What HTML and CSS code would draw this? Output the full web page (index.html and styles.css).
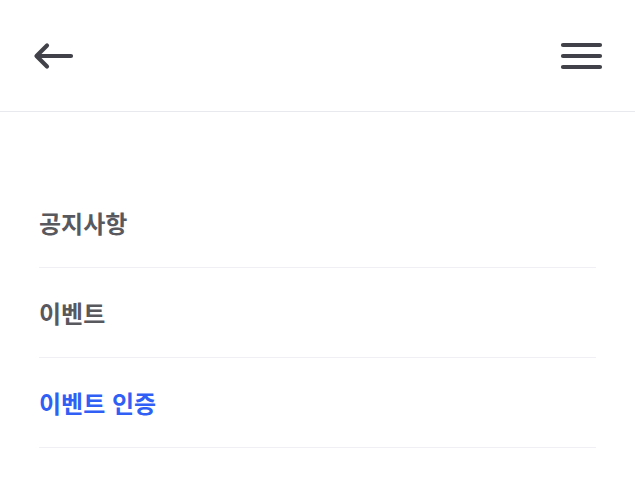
FILE: index.html
```html
<!DOCTYPE html>
<html lang="ko">
<head>
    <meta charset="UTF-8">
    <meta name="viewport" content="width=device-width, initial-scale=1.0">
    <title>메뉴</title>
    <link rel="stylesheet" href="styles.css">
</head>
<body>
    <header class="top-bar">
        <button class="icon-btn" type="button" aria-label="뒤로">
            <svg width="44" height="32" viewBox="0 0 44 32">
                <path d="M6 16 H40 M16 5.5 L5.5 16 L16 26.5" fill="none" stroke="#414149" stroke-width="4.2" stroke-linecap="round" stroke-linejoin="round"/>
            </svg>
        </button>
        <button class="icon-btn" type="button" aria-label="메뉴">
            <svg width="44" height="32" viewBox="0 0 44 32">
                <path d="M3 5 H40 M3 16 H40 M3 27 H40" fill="none" stroke="#414149" stroke-width="4.2" stroke-linecap="round"/>
            </svg>
        </button>
    </header>

    <nav class="menu">
        <a class="menu-item" href="#">공지사항</a>
        <a class="menu-item" href="#">이벤트</a>
        <a class="menu-item active" href="#">이벤트 인증</a>
    </nav>
</body>
</html>
```

FILE: styles.css
```css
body {
    margin: 0;
    padding: 0;
    background-color: #ffffff;
    font-family: "Noto Sans CJK KR", "Noto Sans", sans-serif;
}

.top-bar {
    height: 112px;
    display: flex;
    justify-content: space-between;
    align-items: center;
    padding: 1px 31px 0 31px;
    border-bottom: 1px solid #e8e8ef;
    box-sizing: border-box;
}

.icon-btn {
    background: none;
    border: none;
    padding: 0;
    display: flex;
    cursor: pointer;
}

.menu {
    display: flex;
    flex-direction: column;
    padding: 66px 39px 0 39px;
}

.menu-item {
    height: 89px;
    display: flex;
    align-items: center;
    border-bottom: 1px solid #f0f0f4;
    font-size: 24px;
    font-weight: 600;
    color: #58585f;
    text-decoration: none;
}

.menu-item.active {
    color: #2f5ff5; /* 현재 메뉴 */
}
```
